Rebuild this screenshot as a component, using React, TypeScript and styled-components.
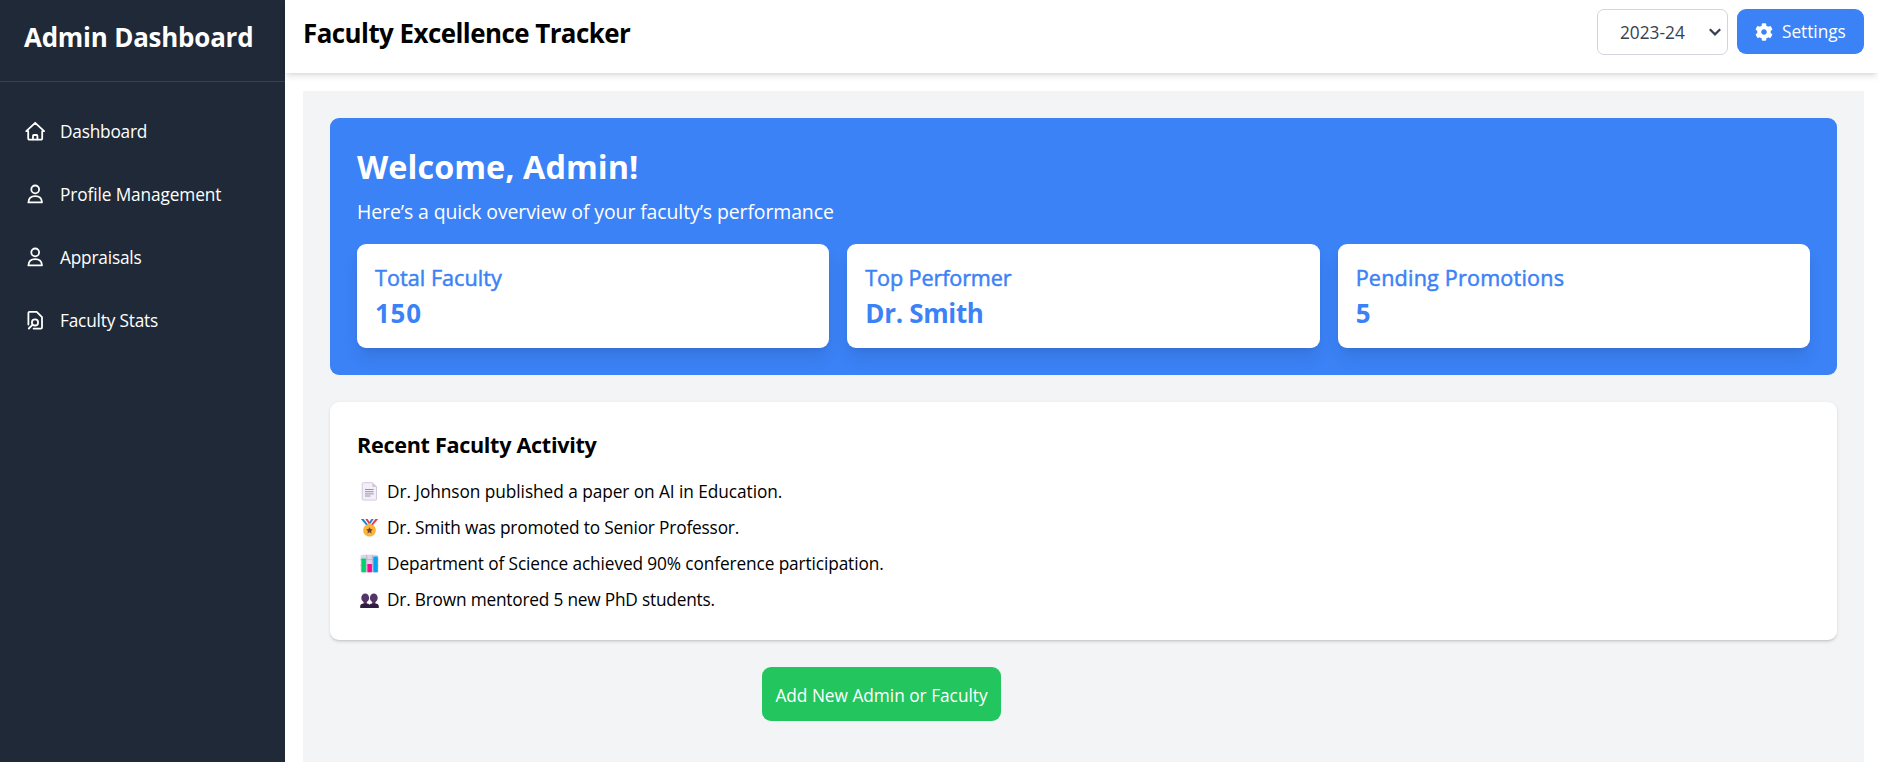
import React from 'react';
import styled, { createGlobalStyle, css } from 'styled-components';
import { FaCog } from 'react-icons/fa';

const GlobalStyle = createGlobalStyle`
  *, *::before, *::after { box-sizing: border-box; }
  body {
    margin: 0;
    background: #fff;
    color: #000;
    font-family: 'Segoe UI', 'Open Sans', sans-serif;
    overflow: hidden;
  }
  h1, h2, h3, p, ul { margin: 0; padding: 0; }
  ul { list-style: none; }
`;

/* Font size and line height in px; drop moves the baseline down inside the line. */
const type = (size: number, line: number, drop = 0) => css`
  font-size: ${size * 0.96}px;
  line-height: ${line - drop * 2}px;
  padding-top: ${drop * 2}px;
  white-space: nowrap;
`;

const tracking = css<{ $ls?: number }>`
  letter-spacing: ${(p) => p.$ls ?? 0}px;
`;

const Shell = styled.div`
  display: flex;
  height: 762px;
`;

const Sidebar = styled.aside`
  flex: 0 0 285px;
  background: #1f2937;
  color: #fff;
`;

const Brand = styled.div`
  height: 82px;
  padding: 19px 24px 0;
  border-bottom: 1px solid #374151;
`;

const BrandTitle = styled.h2`
  ${type(27, 36, 0.5)}
  font-weight: 700;
  letter-spacing: -0.2px;
`;

const Nav = styled.nav`
  display: flex;
  flex-direction: column;
  padding-top: 18px;
`;

const NavItem = styled.a`
  display: flex;
  align-items: center;
  gap: 13.5px;
  height: 63px;
  padding-left: 24px;
`;

const NavIcon = styled.svg`
  width: 22.5px;
  height: 22.5px;
  fill: none;
  stroke: #fff;
  stroke-width: 1.8;
  stroke-linejoin: round;
  stroke-linecap: round;
`;

const NavLabel = styled.span`
  ${type(18, 27)}
  ${tracking}
`;

const Content = styled.div`
  flex: 1;
  min-width: 0;
  display: flex;
  flex-direction: column;
`;

const Header = styled.header`
  display: flex;
  justify-content: space-between;
  align-items: flex-start;
  flex: 0 0 73px;
  padding: 0 14px 0 18px;
  background: #fff;
  box-shadow: 0 4.5px 6.75px -1px rgba(0, 0, 0, 0.1), 0 2.25px 4.5px -2px rgba(0, 0, 0, 0.1);
`;

const PageTitle = styled.h1`
  ${type(27, 36)}
  margin-top: 15px;
  font-weight: 700;
  letter-spacing: -0.54px;
`;

const Actions = styled.div`
  display: flex;
  align-items: flex-start;
  gap: 9px;
  padding-top: 9px;
`;

const YearSelect = styled.div`
  display: flex;
  align-items: center;
  justify-content: space-between;
  width: 131px;
  height: 46px;
  padding: 0 6px 0 22px;
  border: 1px solid #d1d5db;
  border-radius: 7px;
  color: #374151;
`;

const YearText = styled.span`
  ${type(18, 27, 0.5)}
`;

const Chevron = styled.svg`
  width: 12px;
  height: 8px;
  fill: none;
  stroke: #374151;
  stroke-width: 2.2;
`;

const SettingsButton = styled.button`
  display: flex;
  align-items: center;
  gap: 9px;
  width: 127px;
  height: 45px;
  padding: 0 18px;
  border: 0;
  border-radius: 9px;
  background: #3b82f6;
  color: #fff;
  font-family: inherit;
  font-size: 18px;
  svg { flex: none; }
`;

const ButtonText = styled.span<{ $drop?: number }>`
  ${(p) => type(18, 27, p.$drop ?? 0.25)}
  ${tracking}
`;

const Main = styled.main`
  flex: 1;
  margin: 18px 14px 0 18px;
  padding: 27px;
  background: #f3f4f6;
`;

const Hero = styled.section`
  height: 257px;
  padding: 27px 27px 0;
  border-radius: 9px;
  background: #3b82f6;
  color: #fff;
`;

const Welcome = styled.h2`
  ${type(33.75, 40.5, 1)}
  font-weight: 700;
  letter-spacing: 0.04px;
`;

const Lead = styled.p`
  ${type(20.25, 31.5, 1.2)}
  margin-top: 9px;
  letter-spacing: -0.1px;
`;

const Stats = styled.div`
  display: grid;
  grid-template-columns: repeat(3, 1fr);
  gap: 18px;
  margin-top: 18px;
`;

const StatCard = styled.div`
  height: 104px;
  padding: 18px;
  border-radius: 9px;
  background: #fff;
  color: #3b82f6;
  box-shadow: 0 11.25px 16.9px -3.4px rgba(0, 0, 0, 0.1), 0 4.5px 6.75px -4.5px rgba(0, 0, 0, 0.1);
`;

const StatLabel = styled.h3`
  ${type(22.5, 31.5)}
  ${tracking}
  font-weight: 400;
  -webkit-text-stroke: 0.5px #3b82f6;
`;

const StatValue = styled.p`
  ${type(27, 36, 2)}
  ${tracking}
  font-weight: 700;
`;

const Activity = styled.section`
  height: 238px;
  margin-top: 27px;
  padding: 27px;
  border-radius: 9px;
  background: #fff;
  box-shadow: 0 1.1px 3.4px rgba(0, 0, 0, 0.1), 0 1.1px 2.2px -1.1px rgba(0, 0, 0, 0.1);
`;

const ActivityTitle = styled.h3`
  ${type(22.5, 31.5)}
  font-weight: 700;
  letter-spacing: -0.31px;
`;

const ActivityList = styled.ul`
  display: flex;
  flex-direction: column;
  gap: 9px;
  margin-top: 17px;
`;

const ActivityItem = styled.li`
  display: flex;
  align-items: center;
  gap: 8px;
  height: 27px;
  padding-left: 3px;
`;

const Emoji = styled.svg`
  flex: none;
  width: 19px;
  height: 19px;
`;

const ActivityText = styled.span`
  ${type(18, 27)}
  ${tracking}
`;

const AddButton = styled.button`
  display: flex;
  align-items: center;
  justify-content: center;
  width: 239px;
  height: 54px;
  margin: 27px 0 0 432px;
  padding: 0;
  border: 0;
  border-radius: 9px;
  background: #22c55e;
  color: #fff;
  font-family: inherit;
`;

const HomeIcon = () => (
  <NavIcon viewBox="0 0 22.5 22.5">
    <path d="M2.3 11.2 11.2 2.8l8.9 8.4h-1.9v7.2a1.2 1.2 0 0 1-1.2 1.2H5.4a1.2 1.2 0 0 1-1.2-1.2v-7.2z" />
    <path d="M9 19.4v-3.6a.8.8 0 0 1 .8-.8h2.8a.8.8 0 0 1 .8.8v3.6" />
  </NavIcon>
);

const PersonIcon = () => (
  <NavIcon viewBox="0 0 22.5 22.5">
    <circle cx="11.2" cy="6.4" r="3.9" />
    <path d="M4.4 19.4c.2-4 2.8-6.3 6.8-6.3s6.6 2.3 6.8 6.3z" />
  </NavIcon>
);

const FileSearchIcon = () => (
  <NavIcon viewBox="0 0 22.5 22.5">
    <path d="M4.4 15.6V3.9a1.1 1.1 0 0 1 1.1-1.1h7.2L18 8.1v10.4a1.1 1.1 0 0 1-1.1 1.1H9.6" />
    <circle cx="11" cy="13.4" r="3.1" />
    <path d="m8.7 15.7-3.9 3.8" />
  </NavIcon>
);

const PageEmoji = () => (
  <Emoji viewBox="0 0 19 19">
    <path d="M3.2.7h9.3l4 3.9v12.5a1 1 0 0 1-1 1H3.2a1 1 0 0 1-1-1V1.7a1 1 0 0 1 1-1z" fill="#f3eef8" stroke="#d3c9de" />
    <path d="M12.3.9v3a1 1 0 0 0 1 1h3z" fill="#cdc2d8" />
    <path d="M5 7.5h8.6M5 9.7h8.6M5 11.900h8.600M5 14h5.400" stroke="#9a8fa8" strokeWidth="1" />
  </Emoji>
);

const MedalEmoji = () => (
  <Emoji viewBox="0 0 19 19">
    <path d="M.8.9h3.1l5.2 6-2 1.4z" fill="#1983d1" />
    <path d="M3.6.9h2l4.2 5.6-1.2 1z" fill="#f4eef8" />
    <path d="M5.4.9h2.2l2.4 3.7-1 1.6z" fill="#e5374b" />
    <path d="M18.2.9h-3.1l-5.2 6 2 1.4z" fill="#e5374b" />
    <path d="M15.4.9h-2L9.2 6.5l1.2 1z" fill="#f4eef8" />
    <path d="M13.6.9h-2.2L9 4.6l1 1.6z" fill="#1983d1" />
    <circle cx="9.5" cy="12.3" r="6.3" fill="#ffb02e" />
    <circle cx="9.5" cy="12.3" r="4.9" fill="#fcb93f" />
    <path d="m9.5 8.9 1 2.2 2.4.3-1.8 1.6.5 2.4-2.1-1.2-2.1 1.2.5-2.4-1.8-1.6 2.4-.3z" fill="#6d4534" />
  </Emoji>
);

const ChartEmoji = () => (
  <Emoji viewBox="0 0 19 19">
    <rect x=".5" y=".8" width="18" height="17.6" rx="2" fill="#ddd4e6" />
    <path d="M.5 5.6h18M6.7.8v17M12.4.8v17M.5 11.5h18" stroke="#b9abc8" strokeWidth=".8" />
    <rect x="1.4" y="4.6" width="4.5" height="13.7" rx=".5" fill="#00d26a" />
    <rect x="7.4" y="9.9" width="4.5" height="8.4" rx=".5" fill="#f70a8d" />
    <rect x="13.3" y="2.6" width="4.5" height="15.7" rx=".5" fill="#00a6ed" />
  </Emoji>
);

const PeopleEmoji = () => (
  <Emoji viewBox="0 0 19 19">
    <g fill="#533566">
      <ellipse cx="5.2" cy="7.9" rx="3.9" ry="4.5" />
      <ellipse cx="13.8" cy="7.9" rx="3.9" ry="4.5" />
      <path d="M3.6 10.500h3.200v3.500H3.600zM12.200 10.500h3.200v3.500h-3.200z" />
    </g>
    <path d="M.2 18v-1.600c0-2 1.500-2.900 3.400-2.900h3.200c1.200 0 2.100.4 2.700 1.200.6-.8 1.500-1.200 2.700-1.200h3.200c1.900 0 3.400.9 3.400 2.900V18z" fill="#321b41" />
  </Emoji>
);

const navItems = [
  { label: 'Dashboard', Icon: HomeIcon, ls: -0.22 },
  { label: 'Profile Management', Icon: PersonIcon, ls: -0.11 },
  { label: 'Appraisals', Icon: PersonIcon, ls: -0.19 },
  { label: 'Faculty Stats', Icon: FileSearchIcon, ls: -0.2 },
];

const stats = [
  { label: 'Total Faculty', value: '150', ls: 0.04, valueLs: 0.8 },
  { label: 'Top Performer', value: 'Dr. Smith', ls: -0.12, valueLs: -0.3 },
  { label: 'Pending Promotions', value: '5', ls: 0.19, valueLs: 0 },
];

const activities = [
  { text: 'Dr. Johnson published a paper on AI in Education.', Icon: PageEmoji, ls: -0.06 },
  { text: 'Dr. Smith was promoted to Senior Professor.', Icon: MedalEmoji, ls: -0.17 },
  { text: 'Department of Science achieved 90% conference participation.', Icon: ChartEmoji, ls: -0.115 },
  { text: 'Dr. Brown mentored 5 new PhD students.', Icon: PeopleEmoji, ls: -0.2 },
];

export default function App() {
  return (
    <>
      <GlobalStyle />
      <Shell>
        <Sidebar>
          <Brand>
            <BrandTitle>Admin Dashboard</BrandTitle>
          </Brand>
          <Nav>
            {navItems.map(({ label, Icon, ls }) => (
              <NavItem key={label}>
                <Icon />
                <NavLabel $ls={ls}>{label}</NavLabel>
              </NavItem>
            ))}
          </Nav>
        </Sidebar>
        <Content>
          <Header>
            <PageTitle>Faculty Excellence Tracker</PageTitle>
            <Actions>
              <YearSelect>
                <YearText>2023-24</YearText>
                <Chevron viewBox="0 0 12 8">
                  <path d="m.8 1.2 5.2 5.2 5.2-5.2" />
                </Chevron>
              </YearSelect>
              <SettingsButton>
                <FaCog />
                <ButtonText $ls={-0.04}>Settings</ButtonText>
              </SettingsButton>
            </Actions>
          </Header>
          <Main>
            <Hero>
              <Welcome>Welcome, Admin!</Welcome>
              <Lead>Here’s a quick overview of your faculty’s performance</Lead>
              <Stats>
                {stats.map((s) => (
                  <StatCard key={s.label}>
                    <StatLabel $ls={s.ls}>{s.label}</StatLabel>
                    <StatValue $ls={s.valueLs}>{s.value}</StatValue>
                  </StatCard>
                ))}
              </Stats>
            </Hero>
            <Activity>
              <ActivityTitle>Recent Faculty Activity</ActivityTitle>
              <ActivityList>
                {activities.map(({ text, Icon, ls }) => (
                  <ActivityItem key={text}>
                    <Icon />
                    <ActivityText $ls={ls}>{text}</ActivityText>
                  </ActivityItem>
                ))}
              </ActivityList>
            </Activity>
            <AddButton>
              <ButtonText $ls={-0.01} $drop={1}>Add New Admin or Faculty</ButtonText>
            </AddButton>
          </Main>
        </Content>
      </Shell>
    </>
  );
}
